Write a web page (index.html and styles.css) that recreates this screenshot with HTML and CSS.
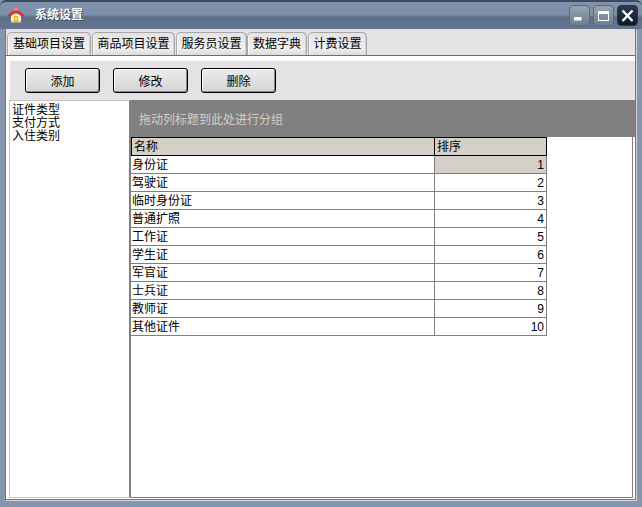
FILE: index.html
```
<!DOCTYPE html>
<html lang="zh">
<head>
<meta charset="utf-8">
<title>系统设置</title>
<link rel="stylesheet" href="styles.css">
</head>
<body>
<div class="window">
  <header class="titlebar">
    <svg class="app-icon" width="16" height="16" viewBox="0 0 16 16">
      <rect x="3" y="7" width="10" height="8.5" fill="#f6ecd2"/>
      <rect x="3" y="14.5" width="10" height="1" fill="#b8a888"/>
      <rect x="6" y="9" width="4" height="6" fill="#e8b020"/>
      <rect x="7" y="10" width="2" height="3" fill="#fbe680"/>
      <path d="M0 8 L8 0.5 L16 8 L16 9.5 L13.5 9.5 L8 4.5 L2.5 9.5 L0 9.5 Z" fill="#d8301e"/>
      <path d="M8 0.5 L12 4.2 L8 3 L4 4.2 Z" fill="#f49078"/>
    </svg>
    <span class="title">系统设置</span>
    <div class="controls">
      <span class="ctl"><svg width="19" height="19" viewBox="0 0 19 19"><rect x="4" y="11" width="7.5" height="3.5" fill="#fff"/></svg></span>
      <span class="ctl"><svg width="19" height="19" viewBox="0 0 19 19"><rect x="4.5" y="5.5" width="10" height="9" fill="none" stroke="#fff"/><rect x="4" y="5" width="11" height="3" fill="#fff"/></svg></span>
      <span class="ctl close"><svg width="19" height="19" viewBox="0 0 19 19"><path d="M4.5 4.5 L14.5 15 M14.5 4.5 L4.5 15" stroke="#fff" stroke-width="2.5" fill="none"/></svg></span>
    </div>
  </header>
  <div class="client">
    <nav class="tabs">
      <span class="tab t1">基础项目设置</span>
      <span class="tab t2">商品项目设置</span>
      <span class="tab t3">服务员设置</span>
      <span class="tab t4">数据字典</span>
      <span class="tab t5">计费设置</span>
    </nav>
    <div class="page">
      <div class="toolbar">
        <button class="btn">添加</button>
        <button class="btn">修改</button>
        <button class="btn">删除</button>
      </div>
      <div class="split">
        <ul class="list">
          <li>证件类型</li>
          <li>支付方式</li>
          <li>入住类别</li>
        </ul>
        <section class="gridarea">
          <div class="groupbar">拖动列标题到此处进行分组</div>
          <div class="gridbody">
            <div class="grid">
              <div class="row head"><span class="c1">名称</span><span class="c2">排序</span></div>
              <div class="row"><span class="c1">身份证</span><span class="c2 selected">1</span></div>
              <div class="row"><span class="c1">驾驶证</span><span class="c2">2</span></div>
              <div class="row"><span class="c1">临时身份证</span><span class="c2">3</span></div>
              <div class="row"><span class="c1">普通扩照</span><span class="c2">4</span></div>
              <div class="row"><span class="c1">工作证</span><span class="c2">5</span></div>
              <div class="row"><span class="c1">学生证</span><span class="c2">6</span></div>
              <div class="row"><span class="c1">军官证</span><span class="c2">7</span></div>
              <div class="row"><span class="c1">士兵证</span><span class="c2">8</span></div>
              <div class="row"><span class="c1">教师证</span><span class="c2">9</span></div>
              <div class="row"><span class="c1">其他证件</span><span class="c2">10</span></div>
            </div>
          </div>
        </section>
      </div>
    </div>
  </div>
</div>
</body>
</html>
```
FILE: styles.css
```
* { box-sizing: border-box; }
html, body { margin: 0; padding: 0; }
body { width: 642px; height: 507px; overflow: hidden; font-family: "Liberation Sans", "Noto Sans CJK SC", sans-serif; font-size: 12px; color: #000; }
.window { width: 642px; height: 507px; display: flex; flex-direction: column; background: #8497ac; padding: 0 6px 7px 5px; }
.titlebar { flex: none; height: 29px; margin: 0 -6px 0 -5px; padding: 5px 4px 0 8px; display: flex; align-items: flex-start; border-top: 2px solid #3c4a60; border-radius: 6px 6px 0 0; background: linear-gradient(to bottom, #8092ad 0, #7d90aa 13px, #5e7088 15px, #65778f 27px); }
.app-icon { flex: none; }
.title { margin-left: 11px; margin-top: -1px; color: #fff; font-weight: 700; font-size: 12px; line-height: 18px; text-shadow: 1px 1px 0 #3c4a60; }
.controls { margin-left: auto; margin-top: -2px; display: flex; gap: 3px; }
.ctl { width: 21px; height: 21px; padding: 0; border: 1px solid #5b6878; border-radius: 4px; background: linear-gradient(to bottom, #96a4b2, #6f7f8c); display: block; }
.ctl svg { display: block; }
.ctl.close { background: linear-gradient(to bottom, #2c3c4c, #0e1a26); border-color: #2a3440; }
.client { flex: 1; min-height: 0; display: flex; flex-direction: column; background: #e4e2e4; border: 1px solid #767676; border-top: none; box-shadow: 1px 1px 0 #d8d4d8; }
.tabs { flex: none; height: 27px; padding: 3px 0 0 1px; display: flex; border-bottom: 1px solid #6e6e6e; }
.tab { height: 23px; line-height: 23px; text-align: center; border: 1px solid #a8a8a8; border-bottom: none; border-radius: 5px 5px 0 0; background: linear-gradient(to bottom, #e4e2e4 0, #f0f0f0 15px, #dcdcdc); box-shadow: inset -1px 0 0 #d0d0d0, inset 1px 0 0 #f8f8f8; }
.t1 { width: 84px; margin-right: 1px; }
.t2 { width: 83px; margin-right: 1px; }
.t3 { width: 71px; }
.t4 { width: 60px; margin-right: 1px; }
.t5 { width: 59px; }
.page { flex: 1; min-height: 0; display: flex; flex-direction: column; background: #fff; padding: 5px 0 1px 3px; }
.toolbar { flex: none; height: 39px; margin-left: 1px; background: #e4e2e4; padding: 7px 0 0 15px; display: flex; gap: 13px; }
.btn { width: 75px; height: 25px; padding: 0; font: inherit; color: #000; border: 1px solid #000; border-radius: 3px; background: linear-gradient(to bottom, #ececec, #d4d4d4); box-shadow: inset -1px -1px 0 #8a8a8a, inset 1px 1px 0 #fff; }
.split { flex: 1; min-height: 0; display: flex; }
.list { flex: none; width: 122px; margin: 0; padding: 3px 0 0 2px; list-style: none; background: #fff; border: 1px solid #c8c4c8; border-right: 2px solid #808080; }
.list li { height: 13px; line-height: 13px; }
.gridarea { flex: 1; min-width: 0; background: #fff; display: flex; flex-direction: column; }
.groupbar { flex: none; height: 37px; background: #808080; color: #d4d0c8; padding: 12px 0 0 8px; line-height: 16px; }
.gridbody { flex: 1; min-height: 0; margin-right: 2px; border-right: 1px solid #808080; border-bottom: 1px solid #808080; }
.grid { width: 416px; }
.row { display: flex; height: 18px; line-height: 19px; border-bottom: 1px solid #808080; }
.row .c1 { width: 304px; padding-left: 1px; border-right: 1px solid #808080; }
.row .c2 { flex: 1; text-align: right; padding-right: 2px; border-right: 1px solid #808080; }
.row .c2.selected { background: #d4d0c8; }
.row.head { height: 19px; background: #d4d0c8; border: 1px solid #000; line-height: 18px; }
.row.head .c1 { border-right: 1px solid #000; width: 303px; padding-left: 2px; }
.row.head .c2 { border-right: none; text-align: left; padding-left: 2px; }
```
